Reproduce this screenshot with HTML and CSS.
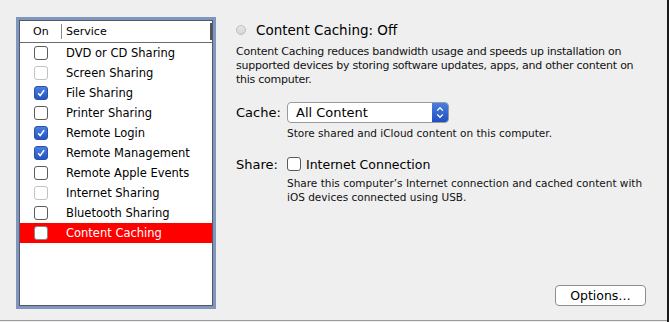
FILE: index.html
```html
<!DOCTYPE html>
<html lang="en">
  <head>
    <meta charset="UTF-8" />
    <title>Sharing</title>
    <link rel="stylesheet" href="styles.css">
  </head>
  <body>
    <div class="window">
      <div class="pane">
        <div class="services">
          <div class="list-head">
            <span class="col-on">On</span>
            <span class="col-service">Service</span>
            <span class="col-end"></span>
          </div>
          <div class="row">
            <span class="box"></span><span class="name">DVD or CD Sharing</span>
          </div>
          <div class="row">
            <span class="box dim"></span><span class="name">Screen Sharing</span>
          </div>
          <div class="row">
            <span class="box on"><svg viewBox="0 0 14 14"><path d="M3.6 7.4 L6 10 L10.6 3.8" /></svg></span><span class="name">File Sharing</span>
          </div>
          <div class="row">
            <span class="box"></span><span class="name">Printer Sharing</span>
          </div>
          <div class="row">
            <span class="box on"><svg viewBox="0 0 14 14"><path d="M3.6 7.4 L6 10 L10.6 3.8" /></svg></span><span class="name">Remote Login</span>
          </div>
          <div class="row">
            <span class="box on"><svg viewBox="0 0 14 14"><path d="M3.6 7.4 L6 10 L10.6 3.8" /></svg></span><span class="name">Remote Management</span>
          </div>
          <div class="row">
            <span class="box"></span><span class="name">Remote Apple Events</span>
          </div>
          <div class="row">
            <span class="box dim"></span><span class="name">Internet Sharing</span>
          </div>
          <div class="row">
            <span class="box"></span><span class="name">Bluetooth Sharing</span>
          </div>
          <div class="row selected">
            <span class="box"></span><span class="name">Content Caching</span>
          </div>
        </div>

        <div class="detail">
          <div class="status">
            <span class="radio"></span>
            <span class="status-text">Content Caching: Off</span>
          </div>
          <p class="intro">
            Content Caching reduces bandwidth usage and speeds up installation on<br />
            supported devices by storing software updates, apps, and other content on<br />
            this computer.
          </p>

          <div class="field">
            <span class="label">Cache:</span>
            <div class="popup">
              <span class="popup-value">All Content</span>
              <span class="popup-arrows">
                <svg viewBox="0 0 16 20"><path d="M5 8 L8 5 L11 8 M5 12 L8 15 L11 12" /></svg>
              </span>
            </div>
          </div>
          <p class="note">Store shared and iCloud content on this computer.</p>

          <div class="field share">
            <span class="label">Share:</span>
            <span class="box"></span>
            <span class="check-label">Internet Connection</span>
          </div>
          <p class="note">
            Share this computer’s Internet connection and cached content with<br />
            iOS devices connected using USB.
          </p>

          <div class="actions">
            <button class="options">Options…</button>
          </div>
        </div>
      </div>
      <div class="edge"></div>
    </div>
  </body>
</html>
```

FILE: styles.css
```css
body {
  margin: 0;
  background-color: #ececec;
  font-family: "DejaVu Sans", "Liberation Sans", sans-serif;
  color: #000;
}

.window {
  display: flex;
  width: 669px;
  height: 322px;
}

.pane {
  flex: 1;
  display: flex;
  height: 320px;
  border-bottom: 1px solid #9c9c9c;
  background-color: #efefef;
}

.edge {
  width: 2px;
  background-color: #1b1b1b;
}

/* service list */

.services {
  margin: 20px 0 0 19px;
  width: 192px;
  height: 284px;
  background: white;
  border: 1px solid #55585e;
  box-shadow: 0 0 0 3px #7f96bf;
}

.list-head {
  display: flex;
  align-items: center;
  height: 21px;
  border-bottom: 1px solid #6b6b6b;
  font-size: 11px;
}

.col-on {
  width: 42px;
  padding-left: 13px;
  box-sizing: border-box;
  border-right: 1px solid #8a8a8a;
  line-height: 15px;
}

.col-service {
  flex: 1;
  padding-left: 4px;
}

.col-end {
  width: 2px;
  height: 17px;
  background-color: #555;
}

.row {
  display: flex;
  align-items: center;
  height: 20px;
  font-size: 11.5px;
}

.row .box {
  margin-left: 14px;
}

.row .name {
  margin-left: 18px;
}

.row.selected {
  background-color: #ff0000;
  color: white;
}

.box {
  display: inline-flex;
  width: 12px;
  height: 12px;
  border: 1px solid #5a5a5a;
  border-radius: 3px;
  background: white;
  flex-shrink: 0;
}

.box.dim {
  border-color: #c2c2c2;
}

.box.on {
  border-color: #2a50a8;
  background: linear-gradient(#4b7fe0, #2455c2);
}

.box svg {
  width: 12px;
  height: 12px;
  fill: none;
  stroke: white;
  stroke-width: 1.7;
}

.selected .box {
  border-color: #8a8a8a;
}

/* detail side */

.detail {
  flex: 1;
  display: flex;
  flex-direction: column;
  padding: 21px 21px 0 23px;
}

.status {
  display: flex;
  align-items: center;
  height: 18px;
}

.radio {
  width: 8px;
  height: 8px;
  border-radius: 50%;
  background: linear-gradient(#e6e6e6, #d6d6d6);
  border: 1px solid #bdbdbd;
}

.status-text {
  margin-left: 10px;
  font-size: 13.5px;
}

.intro {
  margin: 6px 0 0;
  font-size: 11px;
  letter-spacing: -0.25px;
  line-height: 14px;
  color: #111;
  white-space: nowrap;
}

.field {
  display: flex;
  align-items: center;
  height: 20px;
  margin-top: 15px;
}

.label {
  width: 43px;
  font-size: 13px;
  text-align: right;
  margin-right: 8px;
}

.share .label {
  width: 39px;
  margin-right: 12px;
}

.popup {
  display: flex;
  width: 160px;
  height: 19px;
  border: 1px solid #9a9a9a;
  border-radius: 4px;
  background: white;
  overflow: hidden;
}

.popup-value {
  flex: 1;
  padding-left: 8px;
  font-size: 13px;
  line-height: 19px;
}

.popup-arrows {
  width: 16px;
  background: linear-gradient(#4a7fe0, #1f4fbf);
}

.popup-arrows svg {
  width: 16px;
  height: 19px;
  fill: none;
  stroke: white;
  stroke-width: 1.4;
}

.note {
  margin: 4px 0 0 51px;
  font-size: 10.5px;
  line-height: 15px;
  color: #111;
  white-space: nowrap;
}

.share {
  margin-top: 13px;
}

.check-label {
  margin-left: 5px;
  font-size: 12.5px;
}

.share + .note {
  margin-top: 2px;
  line-height: 14px;
}

.actions {
  display: flex;
  justify-content: flex-end;
  margin-top: auto;
  padding-bottom: 14px;
}

.options {
  width: 91px;
  height: 21px;
  padding: 0;
  border: 1px solid #8e8e8e;
  border-radius: 4px;
  background: white;
  font-family: inherit;
  font-size: 12.5px;
  color: #000;
}
```
